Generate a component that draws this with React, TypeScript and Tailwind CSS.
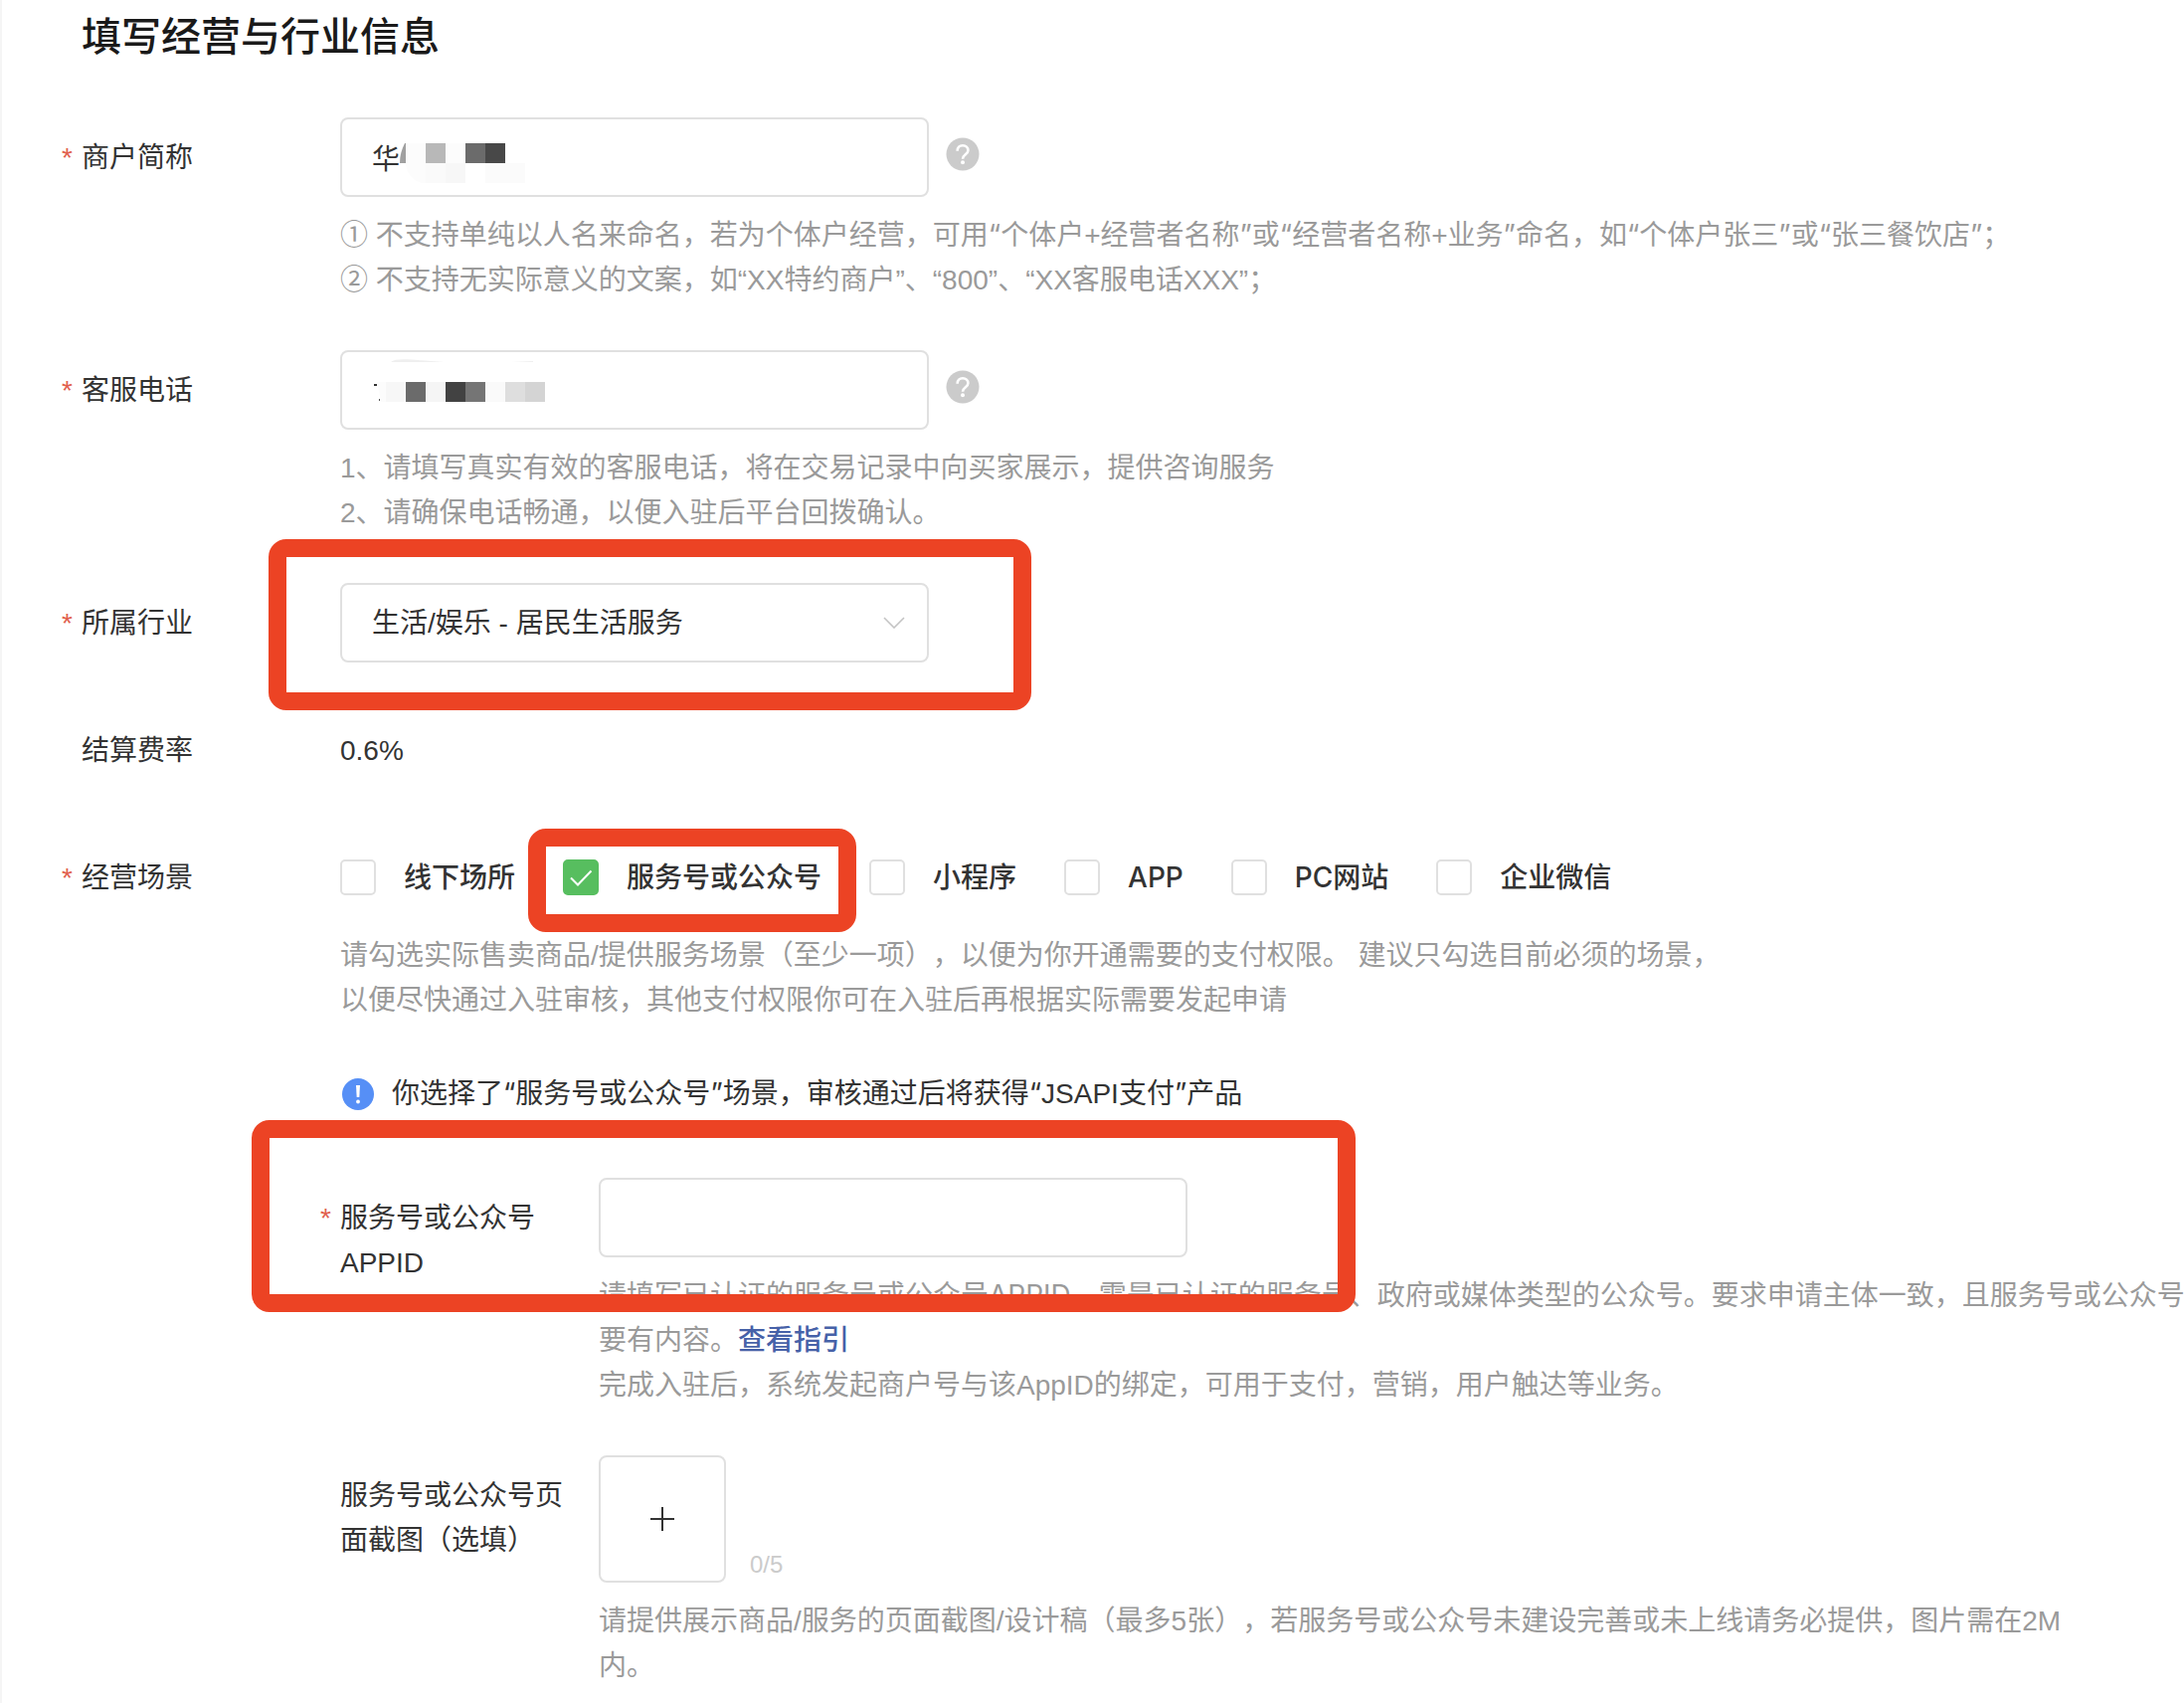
import React from 'react';

interface FieldRowProps {
  label: string;
  htmlFor?: string;
  required?: boolean;
  children: React.ReactNode;
}

const FieldRow: React.FC<FieldRowProps> = ({ label, htmlFor, required, children }) => {
  return (
    <div className="relative flex items-start">
      <div className="relative mr-8 w-[228px] shrink-0 pt-[18px]">
        {required && <span className="absolute -left-5 text-[#e15f4e]">*</span>}
        <label htmlFor={htmlFor} className="block w-[224px]">{label}</label>
      </div>
      <div className="min-w-0 flex-1">{children}</div>
    </div>
  );
};

interface TextProps {
  children: React.ReactNode;
}

const Hint: React.FC<TextProps> = ({ children }) => (
  <div className="mt-4 whitespace-nowrap text-[#9a9a9a]">{children}</div>
);

// Text between a pair of wide curly quotes
const Quoted: React.FC<TextProps> = ({ children }) => (
  <>
    <span className="font-['Inter',sans-serif]">“</span>
    {children}
    <span className="font-['Inter',sans-serif]">”</span>
  </>
);

const HelpButton: React.FC = () => (
  <button type="button" aria-label="帮助" className="ml-[17px] mb-[7px]">
    <svg className="h-[34px] w-[34px]" viewBox="0 0 34 34" fill="none">
      <circle cx="17" cy="17" r="16.5" fill="#cbcbcb" />
      <path
        d="M11.600 13.800c0-3.500 2.200-5.600 5.400-5.600s5.400 2.100 5.400 5c0 4-5.400 4.200-5.400 8.600"
        stroke="#fff"
        strokeWidth="2.6"
      />
      <circle cx="17" cy="25.300" r="2" fill="#fff" />
    </svg>
  </button>
);

const scenes = [
  { id: 'offline', name: '线下场所', checked: false },
  { id: 'official', name: '服务号或公众号', checked: true },
  { id: 'mini', name: '小程序', checked: false },
  { id: 'app', name: 'APP', checked: false },
  { id: 'pc', name: 'PC网站', checked: false },
  { id: 'wecom', name: '企业微信', checked: false },
];

const inputClass =
  'block h-20 w-[592px] rounded-lg border-2 border-[#e0e0e0] bg-white px-[30px] text-[#333] outline-none';

const markClass = 'pointer-events-none absolute border-[18px] border-[#ec4324] rounded-[18px]';

export default function App() {
  return (
    <main className="overflow-hidden border-l-2 border-[#f5f5f5] bg-white pl-20 pb-[17px] font-['Liberation_Sans','Noto_Sans_CJK_SC',sans-serif] text-[28px] leading-[45px] text-[#333] [text-spacing-trim:space-all]">
      <h1 className="pt-2 text-[40px] leading-[58px] font-medium text-[#1a1a1a]">填写经营与行业信息</h1>

      <form className="mt-[52px] flex flex-col gap-12">
        <FieldRow label="商户简称" htmlFor="shortName" required>
          <div className="flex items-center">
            <div className="relative">
              <input id="shortName" type="text" defaultValue="华" className={inputClass} />
              {/* masked part of the name */}
              <svg className="pointer-events-none absolute left-[60px] top-6 h-[42px] w-[128px]" viewBox="0 0 128 42">
                <path d="M6 2h-1C2 8 0 14 0 22h6z" fill="#a0a0a0" />
                <path d="M6 2h20v40h-4C14 40 8 34 6 24z" fill="#fcfcfc" />
                <rect x="26" y="2" width="20" height="20" fill="#b8b8b8" />
                <rect x="46" y="2" width="20" height="20" fill="#fcfcfc" />
                <rect x="66" y="2" width="20" height="20" fill="#6b6b6b" />
                <rect x="86" y="2" width="20" height="20" fill="#484848" />
                <rect x="26" y="22" width="20" height="20" fill="#fafafa" />
                <rect x="46" y="22" width="20" height="20" fill="#f7f7f7" />
                <rect x="86" y="22" width="40" height="20" fill="#fbfbfb" />
              </svg>
            </div>
            <HelpButton />
          </div>
          <Hint>
            <p>
              ① 不支持单纯以人名来命名，若为个体户经营，可用<Quoted>个体户+经营者名称</Quoted>或
              <Quoted>经营者名称+业务</Quoted>命名，如<Quoted>个体户张三</Quoted>或<Quoted>张三餐饮店</Quoted>；
            </p>
            <p>② 不支持无实际意义的文案，如“XX特约商户”、“800”、“XX客服电话XXX”；</p>
          </Hint>
        </FieldRow>

        <FieldRow label="客服电话" htmlFor="phone" required>
          <div className="flex items-center">
            <div className="relative">
              <input id="phone" type="tel" className={inputClass} />
              {/* masked phone number */}
              <svg className="pointer-events-none absolute left-8 top-2 h-12 w-[176px]" viewBox="0 0 176 48">
                <path d="M19 4c6-5 22-2 54 0z" fill="#efefef" />
                <path d="M140 4l22-1v1z" fill="#efefef" />
                <rect x="2" y="26" width="3" height="2" fill="#333" />
                <rect x="7" y="41" width="1" height="2" fill="#555" />
                <path d="M5 24h9v20H9z" fill="#fcfcfc" />
                <rect x="14" y="24" width="20" height="20" fill="#f7f7f7" />
                <rect x="34" y="24" width="20" height="20" fill="#6b6b6b" />
                <rect x="54" y="24" width="20" height="20" fill="#f5f5f5" />
                <rect x="74" y="24" width="20" height="20" fill="#424242" />
                <rect x="94" y="24" width="20" height="20" fill="#757575" />
                <rect x="114" y="24" width="20" height="20" fill="#fafafa" />
                <rect x="134" y="24" width="20" height="20" fill="#dedede" />
                <rect x="154" y="24" width="20" height="20" fill="#d4d4d4" />
              </svg>
            </div>
            <HelpButton />
          </div>
          <Hint>
            <p>1、请填写真实有效的客服电话，将在交易记录中向买家展示，提供咨询服务</p>
            <p>2、请确保电话畅通，以便入驻后平台回拨确认。</p>
          </Hint>
        </FieldRow>

        <FieldRow label="所属行业" htmlFor="industry" required>
          <div className="relative w-[592px]">
            <select id="industry" className={`${inputClass} appearance-none`}>
              <option>生活/娱乐 - 居民生活服务</option>
            </select>
            <svg className="pointer-events-none absolute right-6 top-[34px] h-3 w-[22px]" viewBox="0 0 22 12" fill="none">
              <path d="M1 1l10 10L21 1" stroke="#c4c4c4" strokeWidth="1.6" />
            </svg>
            <div className={`${markClass} -left-[72px] -top-11 h-[172px] w-[767px]`} />
          </div>
        </FieldRow>

        <FieldRow label="结算费率">
          <p className="flex h-20 items-center">0.6%</p>
        </FieldRow>

        <FieldRow label="经营场景" required>
          <div className="flex h-20 items-center gap-12 font-['Inter','Noto_Sans_CJK_SC',sans-serif] font-medium">
            {scenes.map((scene) => (
              <label key={scene.id} className="relative flex items-center gap-7 whitespace-nowrap">
                <input
                  type="checkbox"
                  defaultChecked={scene.checked}
                  className="h-9 w-9 appearance-none rounded-[5px] border-2 border-[#e0e0e0] bg-white checked:border-[#57be5f] checked:bg-[#57be5f]"
                />
                {scene.checked && (
                  <svg className="pointer-events-none absolute left-0 h-9 w-9" viewBox="0 0 36 36" fill="none">
                    <path d="M8 18.5l7 7L28.5 11.5" stroke="#fff" strokeWidth="2" />
                  </svg>
                )}
                {scene.name}
                {scene.checked && <span className={`${markClass} -left-[35px] -top-[27px] h-[104px] w-[330px]`} />}
              </label>
            ))}
          </div>
          <Hint>
            <p>请勾选实际售卖商品/提供服务场景（至少一项），以便为你开通需要的支付权限。 建议只勾选目前必须的场景，</p>
            <p>以便尽快通过入驻审核，其他支付权限你可在入驻后再根据实际需要发起申请</p>
          </Hint>

          <div className="mt-[49px] flex items-center">
            <svg className="mx-px h-[34px] w-[34px]" viewBox="0 0 34 34">
              <circle cx="17" cy="17" r="16" fill="#568ff6" />
              <path d="M15 8h4l-.7 12h-2.600z" fill="#fff" />
              <circle cx="17" cy="24.500" r="1.900" fill="#fff" />
            </svg>
            <p className="ml-4">
              你选择了<Quoted>服务号或公众号</Quoted>场景，审核通过后将获得<Quoted>JSAPI支付</Quoted>产品
            </p>
          </div>

          <div className="mt-[62px] flex flex-col gap-12">
            <div className="relative">
              <FieldRow label="服务号或公众号APPID" htmlFor="appid" required>
                <input id="appid" type="text" className={inputClass} />
                <Hint>
                  <p className="font-['Inter','Noto_Sans_CJK_SC',sans-serif]">
                    请填写已认证的服务号或公众号APPID，需是已认证的服务号、政府或媒体类型的公众号。要求申请主体一致，且服务号或公众号
                  </p>
                  <p>
                    要有内容。<a href="#guide" className="font-medium text-[#4661a8]">查看指引</a>
                  </p>
                  <p>完成入驻后，系统发起商户号与该AppID的绑定，可用于支付，营销，用户触达等业务。</p>
                </Hint>
              </FieldRow>
              <div className={`${markClass} -left-[89px] -top-[58px] h-[193px] w-[1110px]`} />
            </div>

            <FieldRow label="服务号或公众号页面截图（选填）" htmlFor="upload">
              <div className="flex items-end gap-6">
                <button
                  id="upload"
                  type="button"
                  aria-label="上传"
                  className="flex h-32 w-32 items-center justify-center rounded-lg border-2 border-[#e0e0e0]"
                >
                  <svg className="h-6 w-6" viewBox="0 0 24 24">
                    <path d="M12 0v24M0 12h24" stroke="#333" strokeWidth="2" />
                  </svg>
                </button>
                <span className="text-2xl leading-9 text-[#cbcbcb]">0/5</span>
              </div>
              <Hint>
                <p>请提供展示商品/服务的页面截图/设计稿（最多5张），若服务号或公众号未建设完善或未上线请务必提供，图片需在2M</p>
                <p>内。</p>
              </Hint>
            </FieldRow>
          </div>
        </FieldRow>
      </form>
    </main>
  );
}
